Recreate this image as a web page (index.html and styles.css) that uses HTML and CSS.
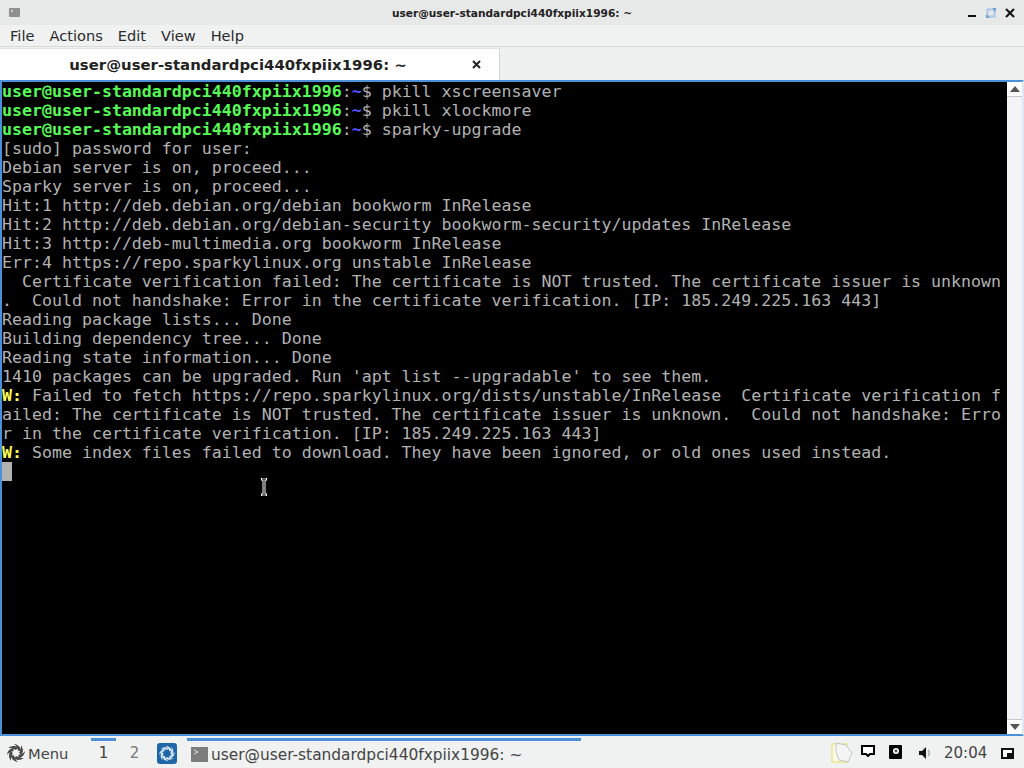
FILE: index.html
```html
<!DOCTYPE html>
<html lang="en">
<head>
<meta charset="utf-8">
<title>Terminal</title>
<link rel="stylesheet" href="styles.css">
</head>
<body>
<div class="window">
  <header class="titlebar">
    <div class="tb-left"><svg width="11" height="9" viewBox="0 0 11 9"><rect width="11" height="9" rx="1" fill="#8f8f8f"/><path d="M2 2l2 1-2 1" stroke="#ddd" fill="none"/></svg></div>
    <div class="title">user@user-standardpci440fxpiix1996: ~</div>
    <div class="win-buttons">
      <svg width="10" height="10" viewBox="0 0 10 10"><rect x="1" y="7" width="8" height="2" fill="#111"/></svg>
      <svg width="10" height="10" viewBox="0 0 10 10"><rect x="1.5" y="1.5" width="7" height="7" fill="none" stroke="#a9c6e6" stroke-width="2"/><path d="M6 0h4v4zM4 10H0V6z" fill="#6f9fd0"/></svg>
      <svg width="10" height="10" viewBox="0 0 10 10"><path d="M1 1l8 8M9 1l-8 8" stroke="#111" stroke-width="2"/></svg>
    </div>
  </header>
  <nav class="menubar">
    <span>File</span><span>Actions</span><span>Edit</span><span>View</span><span>Help</span>
  </nav>
  <div class="tabs">
    <div class="tab">
      <span class="tab-label">user@user-standardpci440fxpiix1996: ~</span>
      <svg class="tab-close" width="9" height="9" viewBox="0 0 9 9"><path d="M1 1l7 7M8 1l-7 7" stroke="#222" stroke-width="2"/></svg>
    </div>
  </div>
  <main class="term-frame">
    <pre class="terminal"><b class="g">user@user-standardpci440fxpiix1996</b>:<b class="b">~</b>$ pkill xscreensaver
<b class="g">user@user-standardpci440fxpiix1996</b>:<b class="b">~</b>$ pkill xlockmore
<b class="g">user@user-standardpci440fxpiix1996</b>:<b class="b">~</b>$ sparky-upgrade
[sudo] password for user:
Debian server is on, proceed...
Sparky server is on, proceed...
Hit:1 http://deb.debian.org/debian bookworm InRelease
Hit:2 http://deb.debian.org/debian-security bookworm-security/updates InRelease
Hit:3 http://deb-multimedia.org bookworm InRelease
Err:4 https://repo.sparkylinux.org unstable InRelease
  Certificate verification failed: The certificate is NOT trusted. The certificate issuer is unknown
.  Could not handshake: Error in the certificate verification. [IP: 185.249.225.163 443]
Reading package lists... Done
Building dependency tree... Done
Reading state information... Done
1410 packages can be upgraded. Run 'apt list --upgradable' to see them.
<b class="y">W:</b> Failed to fetch https://repo.sparkylinux.org/dists/unstable/InRelease  Certificate verification f
ailed: The certificate is NOT trusted. The certificate issuer is unknown.  Could not handshake: Erro
r in the certificate verification. [IP: 185.249.225.163 443]
<b class="y">W:</b> Some index files failed to download. They have been ignored, or old ones used instead.
<span class="cursor"> </span></pre>
    <svg class="ibeam" width="8" height="18" viewBox="0 0 8 18"><path d="M1 1h6M1 17h6M4 1v16" fill="none" stroke="#fff" stroke-width="3"/><path d="M2 1h4M2 17h4M4 1v16" fill="none" stroke="#000" stroke-width="1"/></svg>
    <div class="scrollbar">
      <div class="arrow arrow-up"><svg width="12" height="8" viewBox="0 0 12 8"><path d="M6 1l5 6H1z" fill="#555"/></svg></div>
      <div class="trough"></div>
      <div class="arrow arrow-down"><svg width="12" height="8" viewBox="0 0 12 8"><path d="M6 7L1 1h10z" fill="#555"/></svg></div>
    </div>
  </main>
</div>
<footer class="panel">
  <div class="menu">
    <svg width="18" height="18" viewBox="-9 -9 18 18"><g fill="#484848"><path id="blade" d="M-2-9C2-8.5 5-6 5-2L1.8-2.6C1.8-5.2 0-7.5-2-9z"/><use href="#blade" transform="rotate(45)"/><use href="#blade" transform="rotate(90)"/><use href="#blade" transform="rotate(135)"/><use href="#blade" transform="rotate(180)"/><use href="#blade" transform="rotate(225)"/><use href="#blade" transform="rotate(270)"/><use href="#blade" transform="rotate(315)"/></g></svg>
    <span>Menu</span>
  </div>
  <div class="workspaces">
    <span class="ws ws-active">1</span>
    <span class="ws ws-other">2</span>
  </div>
  <svg class="launcher" width="20" height="21" viewBox="-10 -10.5 20 21"><rect x="-10" y="-10.5" width="20" height="21" rx="3" fill="#1f66a8"/><g fill="#d5e5f3"><path id="sw" d="M-1.5-8C2-7.5 4.5-5.5 5-2L2.2-2.6C1.8-5-.2-6.8-1.5-8z"/><use href="#sw" transform="rotate(45)"/><use href="#sw" transform="rotate(90)"/><use href="#sw" transform="rotate(135)"/><use href="#sw" transform="rotate(180)"/><use href="#sw" transform="rotate(225)"/><use href="#sw" transform="rotate(270)"/><use href="#sw" transform="rotate(315)"/></g></svg>
  <div class="taskbtn">
    <svg width="17" height="15" viewBox="0 0 17 15"><rect width="17" height="15" fill="#7d7d7d"/><path d="M3 3l4 2-4 2" fill="none" stroke="#ddd"/></svg>
    <span>user@user-standardpci440fxpiix1996: ~</span>
  </div>
  <div class="tray">
    <svg class="t-clip" width="22" height="22" viewBox="0 0 22 22"><rect x="1" y="2" width="15" height="18" fill="#fbfbe6" stroke="#efe9a6" stroke-width="2"/><path d="M5 1l10 2 6 8-4 9-9-2-3-8z" fill="#f4f4f4" stroke="#c4c4c4"/></svg>
    <svg class="t-speech" width="14" height="12" viewBox="0 0 14 12"><path d="M1 1h12v8H9l-2 2-2-2H1z" fill="#fff" stroke="#000" stroke-width="2"/></svg>
    <svg class="t-cam" width="13" height="14" viewBox="0 0 13 14"><rect width="13" height="14" rx="1" fill="#000"/><circle cx="7" cy="6" r="3" fill="#fff"/><circle cx="7" cy="6" r="1.4" fill="#555"/></svg>
    <svg class="t-vol" width="14" height="14" viewBox="0 0 14 14"><path d="M1 5h3l4-4v12L4 9H1z" fill="#111"/><path d="M10 4a4 4 0 0 1 0 6" fill="none" stroke="#aaa" stroke-width="1.5"/></svg>
    <span class="clock">20:04</span>
    <svg class="t-screen" width="13" height="11" viewBox="0 0 13 11"><rect x="1" y="1" width="11" height="9" fill="#fff" stroke="#111" stroke-width="2"/><rect x="6" y="5" width="6" height="5" fill="#111"/></svg>
  </div>
</footer>
</body>
</html>
```

FILE: styles.css
```css
* { box-sizing: border-box; }
html, body { margin: 0; padding: 0; width: 1024px; height: 768px; overflow: hidden; }
body { display: flex; flex-direction: column; background: #eff0f0; font-family: "DejaVu Sans", sans-serif; color: #222; }
.window { flex: 1; display: flex; flex-direction: column; min-height: 0; }
.titlebar { height: 25px; background: #e7e8e8; display: grid; grid-template-columns: 1fr auto 1fr; align-items: center; padding: 0 9px; }
.tb-left { display: flex; }
.title { font-size: 10.6px; font-weight: bold; color: #222; }
.win-buttons { display: flex; gap: 9px; align-items: center; justify-content: flex-end; }
.menubar { height: 22px; background: #f0f1f1; display: flex; align-items: center; gap: 15px; padding: 0 10px; font-size: 14.6px; color: #2a2a2a; border-bottom: 1px solid #d9d9d9; }
.tabs { height: 33px; background: #eff0f0; display: flex; align-items: flex-end; padding-top: 1px; }
.tab { width: 500px; height: 32px; background: #fff; border-top: 1px solid #e2e2e2; border-right: 1px solid #d4d4d4; display: flex; align-items: center; }
.tab-label { flex: 1; text-align: center; font-weight: bold; font-size: 14.9px; color: #222; padding-left: 4px; }
.tab-close { margin-right: 18px; }
.term-frame { flex: 1; min-height: 0; display: flex; background: #000; border: 2px solid #4a90d9; border-right: 2px solid #dce8f5; position: relative; }
.terminal { flex: 1; margin: 0; background: #000; color: #b2b2b2; font-family: "DejaVu Sans Mono", monospace; font-size: 16.6px; line-height: 19px; overflow: hidden; }
.terminal b { font-weight: bold; }
.g { color: #55fc55; }
.b { color: #5555fc; }
.y { color: #fcfc55; }
.cursor { display: inline-block; width: 10px; height: 19px; background: #b2b2b2; vertical-align: top; }
.ibeam { position: absolute; left: 258px; top: 396px; }
.scrollbar { width: 15px; flex: none; background: #f3f4f6; display: flex; flex-direction: column; }
.arrow { height: 15px; display: flex; align-items: center; justify-content: center; background: #fff; }
.arrow-up { border-bottom: 1px solid #c8c8c8; }
.arrow-down { border-top: 1px solid #c8c8c8; }
.trough { flex: 1; }
.panel { height: 32px; flex: none; background: #f0f1f1; display: flex; align-items: center; font-size: 15px; color: #444; padding-top: 2px; }
.menu { display: flex; align-items: center; gap: 3px; margin-left: 7px; width: 84px; font-size: 14.7px; }
.workspaces { display: flex; align-self: stretch; }
.ws { width: 25px; margin-right: 6px; text-align: center; border-top: 3px solid transparent; line-height: 25px; }
.ws-active { border-top-color: #4a90d9; }
.ws-other { color: #777; }
.launcher { margin-left: 4px; }
.taskbtn { margin-left: 10px; width: 394px; align-self: stretch; border-top: 3px solid #4a90d9; display: flex; align-items: center; gap: 3px; padding-left: 4px; font-size: 15.4px; }
.tray { margin-left: auto; display: flex; align-items: center; padding-right: 10px; }
.t-speech { margin-left: 8px; margin-top: -4px; }
.t-cam { margin-left: 14px; margin-top: -2px; }
.t-vol { margin-left: 16px; }
.clock { font-size: 15px; margin-left: 12px; width: 44px; }
.t-screen { margin-left: 13px; }
```
